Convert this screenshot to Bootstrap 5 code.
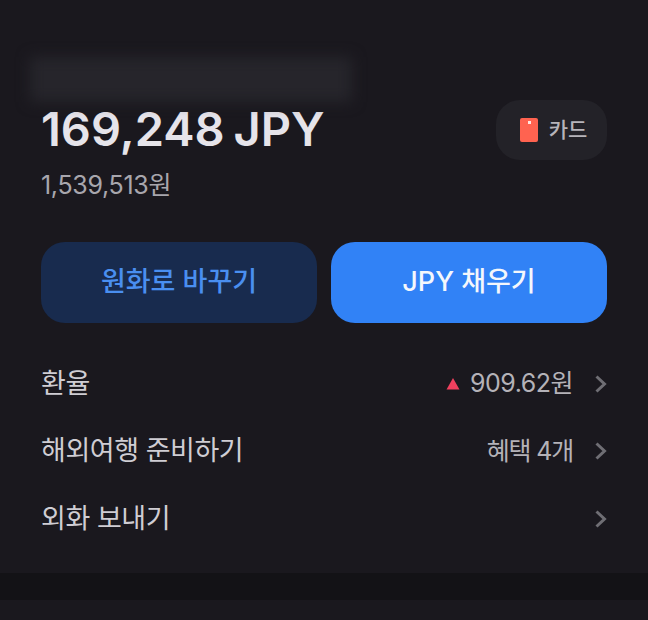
<!doctype html>
<html lang="ko">
<head>
<meta charset="utf-8">
<title>JPY</title>
<link href="https://cdn.jsdelivr.net/npm/bootstrap@5.3.0/dist/css/bootstrap.min.css" rel="stylesheet">
<style>
html,body{height:620px;overflow:hidden}
body{background:#1a181e;font-family:Inter,"Noto Sans CJK KR",sans-serif;color:#e6e4ea}
.wrap{padding:57px 41px 0 41px;height:573px}
.blurbar{height:45px;width:322px;margin-left:-11px;background:#26252b;filter:blur(7px)}
.head{margin-top:-2px}
.amount{font-size:47px;font-weight:600;line-height:56px;padding-top:1px;color:#e6e4ea;word-spacing:-3px}
.sub{font-size:25px;line-height:32px;color:#a8a6ad;letter-spacing:-.3px;margin-top:12px}
.chip{width:111px;height:60px;padding-left:4px;border-radius:24px;background:#232228;color:#b6b4ba;font-size:21px;font-weight:500;gap:11px}
.acts{margin-top:41px}
.acts .btn{width:276px;height:81px;border:0;border-radius:24px;font-size:27px;font-weight:500;padding:0}
.btn-a,.btn-a:hover{background:#182b4e;color:#4a8ff0}
.btn-b,.btn-b:hover{background:#3182f6;color:#f4f7fc}
.lines{margin-top:27px}
.line{height:67.5px;font-size:27px;color:#cfcdd3;letter-spacing:-.45px}
.val{font-size:25px;color:#b4b2b8;letter-spacing:-.5px}
.val-tight{letter-spacing:-1.2px}
.tri{margin-right:10px}
.gap-chev{margin-left:22px}
.sep{height:27px;background:#131216}
</style>
</head>
<body>
<main class="wrap">
  <div class="blurbar"></div>
  <div class="head d-flex justify-content-between align-items-start">
    <div>
      <div class="amount">169,248 JPY</div>
      <div class="sub">1,539,513원</div>
    </div>
    <div class="chip d-flex align-items-center justify-content-center flex-shrink-0">
      <svg width="18" height="24" viewBox="0 0 18 24" aria-hidden="true"><rect width="18" height="24" rx="2" fill="#ff6350"/><rect x="8" y="3" width="3" height="3" fill="#ffe6e0"/></svg>
      <span>카드</span>
    </div>
  </div>
  <div class="acts d-flex justify-content-between">
    <button class="btn btn-a" type="button">원화로 바꾸기</button>
    <button class="btn btn-b" type="button">JPY 채우기</button>
  </div>
  <div class="lines">
    <div class="line d-flex align-items-center justify-content-between">
      <span>환율</span>
      <span class="d-flex align-items-center">
        <svg class="tri" width="14" height="12" viewBox="0 0 14 12" aria-hidden="true"><path d="M7 0 13.500 11.500H.5Z" fill="#f0405e"/></svg>
        <span class="val">909.62원</span>
        <svg class="gap-chev" width="12" height="20" viewBox="0 0 12 20" aria-hidden="true"><path d="M1.500 2.500l8 7.500-8 7.500" fill="none" stroke="#6f6e74" stroke-width="3"/></svg>
      </span>
    </div>
    <div class="line d-flex align-items-center justify-content-between">
      <span>해외여행 준비하기</span>
      <span class="d-flex align-items-center">
        <span class="val val-tight">혜택 4개</span>
        <svg class="gap-chev" width="12" height="20" viewBox="0 0 12 20" aria-hidden="true"><path d="M1.500 2.500l8 7.500-8 7.500" fill="none" stroke="#6f6e74" stroke-width="3"/></svg>
      </span>
    </div>
    <div class="line d-flex align-items-center justify-content-between">
      <span>외화 보내기</span>
      <svg width="12" height="20" viewBox="0 0 12 20" aria-hidden="true"><path d="M1.500 2.500l8 7.500-8 7.500" fill="none" stroke="#6f6e74" stroke-width="3"/></svg>
    </div>
  </div>
</main>
<div class="sep"></div>
<script src="https://cdn.jsdelivr.net/npm/bootstrap@5.3.0/dist/js/bootstrap.bundle.min.js"></script>
</body>
</html>
